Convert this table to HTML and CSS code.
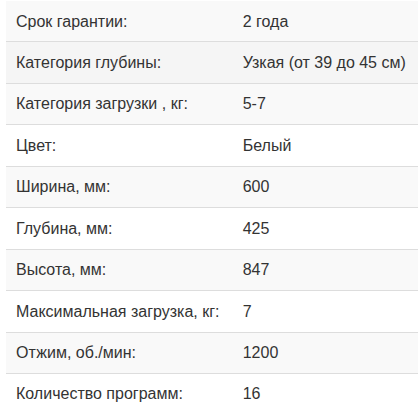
FILE: index.html
```html
<!DOCTYPE html>
<html lang="ru">
<head>
<meta charset="utf-8">
<link rel="stylesheet" href="styles.css">
</head>
<body>
<div class="wrap">
<table class="specs">
<tbody>
<tr><td class="k">Срок гарантии:</td><td>2 года</td></tr>
<tr class="hover"><td class="k">Категория глубины:</td><td>Узкая (от 39 до 45 см)</td></tr>
<tr><td class="k">Категория загрузки , кг:</td><td>5-7</td></tr>
<tr><td class="k">Цвет:</td><td>Белый</td></tr>
<tr><td class="k">Ширина, мм:</td><td>600</td></tr>
<tr><td class="k">Глубина, мм:</td><td>425</td></tr>
<tr><td class="k">Высота, мм:</td><td>847</td></tr>
<tr><td class="k">Максимальная загрузка, кг:</td><td>7</td></tr>
<tr><td class="k">Отжим, об./мин:</td><td>1200</td></tr>
<tr><td class="k">Количество программ:</td><td>16</td></tr>
</tbody>
</table>
</div>
</body>
</html>
```
FILE: styles.css
```css
html, body {
  margin: 0;
  padding: 0;
  background: #fff;
  overflow: hidden;
}
.wrap {
  padding-left: 6px;
  width: 430px;
}
.specs {
  width: 100%;
  border-collapse: collapse;
  font-family: "Liberation Sans", Arial, sans-serif;
  font-size: 16px;
  color: #333;
}
.specs td {
  padding: 9.5px 10px 9.5px 10px;
  line-height: 21.43px;
  border-top: 1px solid #ddd;
  vertical-align: top;
  text-align: left;
  white-space: nowrap;
}
.specs tr:first-child td {
  border-top-color: transparent;
}
.specs td.k {
  width: 206.7px;
}
.specs tr:nth-child(odd) td {
  background: #f9f9f9;
}
.specs tr.hover td {
  background: #f5f5f5;
}
```
